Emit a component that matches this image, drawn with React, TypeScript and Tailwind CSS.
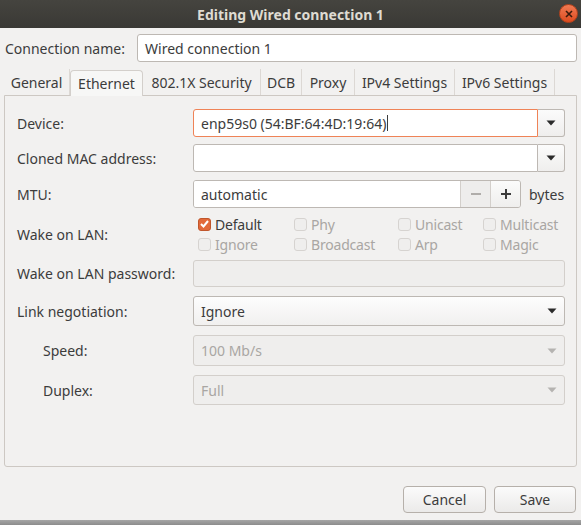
import React from "react";

const font = { fontFamily: '"Noto Sans", "DejaVu Sans", sans-serif' };

function Arrow({ disabled = false }: { disabled?: boolean }) {
  return (
    <svg width="10" height="6" viewBox="0 0 10 6">
      <path d="M0.5 0.5 L9.5 0.5 L5 5.5 Z" fill={disabled ? "#b5b3b1" : "#2b2b2b"} />
    </svg>
  );
}

function Check({ checked = false, label }: { checked?: boolean; label: string }) {
  return (
    <div className="flex items-center h-[20px]">
      {checked ? (
        <div className="w-[13px] h-[13px] rounded-[3px] bg-[#e2693a] border border-[#c0562b] flex items-center justify-center">
          <svg width="9" height="8" viewBox="0 0 9 8">
            <path d="M1 4 L3.5 6.5 L8 1" stroke="#fff" strokeWidth="2" fill="none" />
          </svg>
        </div>
      ) : (
        <div className="w-[13px] h-[13px] rounded-[3px] bg-[#efeeed] border border-[#d6d3d0]" />
      )}
      <span className={"ml-[4px] text-[14px] tracking-[-0.2px] " + (checked ? "text-[#3c3c3c]" : "text-[#a9a6a3]")}>{label}</span>
    </div>
  );
}

function Row({ label, indent = false, children, className = "" }: { label: string; indent?: boolean; children: React.ReactNode; className?: string }) {
  return (
    <div className={"flex items-center " + className}>
      <div className={"w-[176px] text-[14px] text-[#3c3c3c] shrink-0 " + (indent ? "pl-[26px]" : "")}>{label}</div>
      <div className="flex-1 flex items-center">{children}</div>
    </div>
  );
}

export default function App() {
  const tabs = [
    { t: "General", w: 66 },
    { t: "Ethernet", w: 73, sel: true },
    { t: "802.1X Security", w: 118 },
    { t: "DCB", w: 41 },
    { t: "Proxy", w: 53 },
    { t: "IPv4 Settings", w: 100 },
    { t: "IPv6 Settings", w: 100 },
  ];
  return (
    <div className="w-[581px] h-[525px] bg-[#9c9c9c] overflow-hidden" style={font}>
      <div className="w-[581px] h-[520px] bg-[#f2f1f0] flex flex-col">
        {/* Title bar */}
        <div className="h-[28px] bg-gradient-to-b from-[#45443f] to-[#3a3935] flex items-center justify-center relative shrink-0">
          <span className="text-[14px] font-bold text-[#dfdbd2]">Editing Wired connection 1</span>
          <div className="absolute right-[3px] top-[4px] w-[19px] h-[19px] rounded-full bg-gradient-to-b from-[#f07a52] to-[#dd4a1c] border border-[#b8431d] flex items-center justify-center">
            <svg width="8" height="8" viewBox="0 0 8 8">
              <path d="M1 1 L7 7 M7 1 L1 7" stroke="#3a1a0c" strokeWidth="1.6" />
            </svg>
          </div>
        </div>

        {/* Connection name */}
        <div className="flex items-center mt-[6px] pl-[5px] pr-[4px]">
          <div className="w-[132px] text-[14px] text-[#3c3c3c]">Connection name:</div>
          <div className="flex-1 h-[28px] bg-white border border-[#bdb8b3] rounded-[3px] flex items-center px-[7px] text-[14px] text-[#3c3c3c]">
            Wired connection 1
          </div>
        </div>

        {/* Tabs */}
        <div className="flex mt-[7px] ml-[4px] h-[26px] items-end">
          {tabs.map((tab) =>
            tab.sel ? (
              <div
                key={tab.t}
                style={{ width: tab.w }}
                className="h-[26px] bg-[#f7f7f6] border border-b-0 border-[#d3cfcb] rounded-t-[4px] flex items-center justify-center text-[14px] text-[#3c3c3c] relative top-[1px]"
              >
                {tab.t}
              </div>
            ) : (
              <div
                key={tab.t}
                style={{ width: tab.w }}
                className="h-[26px] flex items-center justify-center text-[14px] text-[#3c3c3c] border-r border-[#dcd8d4]"
              >
                {tab.t}
              </div>
            )
          )}
        </div>

        {/* Panel */}
        <div className="mx-[4px] h-[372px] border border-[#cdc8c3] rounded-b-[3px] bg-[#f2f1f0] pt-[13px] pl-[12px] pr-[11px]">
          <Row label="Device:">
            <div className="flex-1 flex h-[28px]">
              <div className="flex-1 bg-white border border-[#ef8357] rounded-l-[3px] flex items-center px-[7px] text-[14px] text-[#3c3c3c]">
                enp59s0 (54:BF:64:4D:19:64)<span className="inline-block w-[1px] h-[16px] bg-[#3c3c3c] ml-[1px]" />
              </div>
              <div className="w-[27px] bg-gradient-to-b from-[#fbfbfb] to-[#efeeed] border border-l-0 border-[#bdb8b3] rounded-r-[3px] flex items-center justify-center">
                <Arrow />
              </div>
            </div>
          </Row>
          <Row label="Cloned MAC address:" className="mt-[7px]">
            <div className="flex-1 flex h-[28px]">
              <div className="flex-1 bg-white border border-[#bdb8b3] rounded-l-[3px]" />
              <div className="w-[27px] bg-gradient-to-b from-[#fbfbfb] to-[#efeeed] border border-l-0 border-[#bdb8b3] rounded-r-[3px] flex items-center justify-center">
                <Arrow />
              </div>
            </div>
          </Row>
          <Row label="MTU:" className="mt-[8px]">
            <div className="w-[328px] flex h-[28px] border border-[#bdb8b3] rounded-[3px] overflow-hidden">
              <div className="flex-1 bg-white flex items-center px-[7px] text-[14px] text-[#3c3c3c]">automatic</div>
              <div className="w-[30px] bg-[#eeedec] border-l border-[#d3cfcb] flex items-center justify-center">
                <div className="w-[10px] h-[1.5px] bg-[#b0adaa]" />
              </div>
              <div className="w-[30px] bg-gradient-to-b from-[#fbfbfb] to-[#efeeed] border-l border-[#d3cfcb] flex items-center justify-center relative">
                <div className="w-[10px] h-[2px] bg-[#3c3c3c]" />
                <div className="absolute w-[2px] h-[10px] bg-[#3c3c3c]" />
              </div>
            </div>
            <span className="ml-[8px] text-[14px] text-[#3c3c3c]">bytes</span>
          </Row>
          <Row label="Wake on LAN:" className="mt-[6px]">
            <div className="grid grid-cols-[96px_104px_85px_auto] pl-[5px]">
              <Check checked label="Default" />
              <Check label="Phy" />
              <Check label="Unicast" />
              <Check label="Multicast" />
              <Check label="Ignore" />
              <Check label="Broadcast" />
              <Check label="Arp" />
              <Check label="Magic" />
            </div>
          </Row>
          <Row label="Wake on LAN password:" className="mt-[6px]">
            <div className="flex-1 h-[27px] bg-[#efeeed] border border-[#d3cfcb] rounded-[3px]" />
          </Row>
          <Row label="Link negotiation:" className="mt-[9px]">
            <div className="flex-1 h-[30px] bg-gradient-to-b from-[#fdfdfd] to-[#f1f0ef] border border-[#bdb8b3] rounded-[3px] flex items-center justify-between pl-[7px] pr-[7px] text-[14px] text-[#3c3c3c]">
              Ignore
              <Arrow />
            </div>
          </Row>
          <Row label="Speed:" indent className="mt-[9px]">
            <div className="flex-1 h-[31px] bg-[#efeeed] border border-[#d3cfcb] rounded-[3px] flex items-center justify-between pl-[7px] pr-[7px] text-[14px] text-[#a9a6a3]">
              100 Mb/s
              <Arrow disabled />
            </div>
          </Row>
          <Row label="Duplex:" indent className="mt-[9px]">
            <div className="flex-1 h-[30px] bg-[#efeeed] border border-[#d3cfcb] rounded-[3px] flex items-center justify-between pl-[7px] pr-[7px] text-[14px] text-[#a9a6a3]">
              Full
              <Arrow disabled />
            </div>
          </Row>
        </div>

        {/* Buttons */}
        <div className="flex justify-end gap-[8px] mt-[19px] pr-[5px]">
          <button className="w-[83px] h-[27px] bg-gradient-to-b from-[#fbfbfb] to-[#ebeae9] border border-[#b6b0aa] rounded-[4px] text-[14px] text-[#3c3c3c]">
            Cancel
          </button>
          <button className="w-[82px] h-[27px] bg-gradient-to-b from-[#fbfbfb] to-[#ebeae9] border border-[#b6b0aa] rounded-[4px] text-[14px] text-[#3c3c3c]">
            Save
          </button>
        </div>
      </div>
      <div className="h-[5px] bg-gradient-to-b from-[#a6a6a6] to-[#8c8c8c]" />
    </div>
  );
}
